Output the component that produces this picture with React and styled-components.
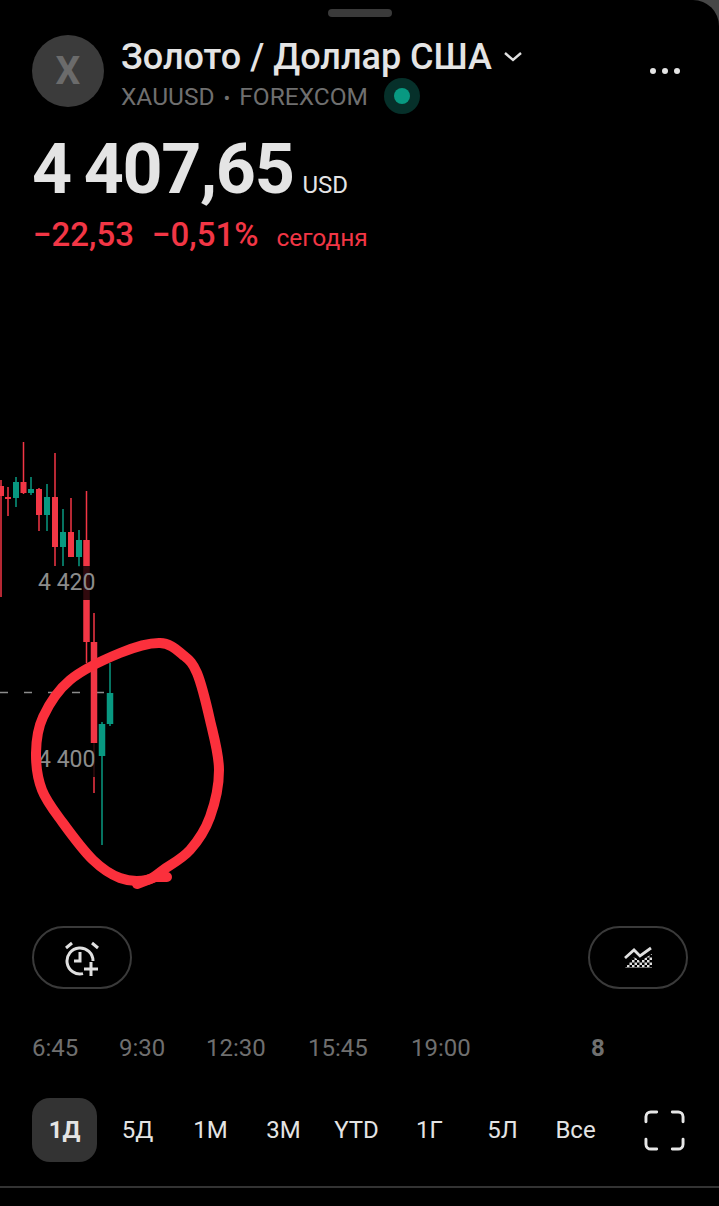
import React from "react"
import styled, { createGlobalStyle } from "styled-components"

const RANGES = ["1Д", "5Д", "1М", "3М", "YTD", "1Г", "5Л", "Все"]
const TIMES = [
  { label: "6:45", width: 87 },
  { label: "9:30", width: 87 },
  { label: "12:30", width: 102 },
  { label: "15:45", width: 103 },
  { label: "19:00", width: 180 },
  { label: "8", bold: true },
]

// x, wick top, wick bottom, body top, body bottom, width
const CANDLES = [
  { up: false, x: 1, wt: 480, wb: 597, bt: 486, bb: 496, w: 6 },
  { up: false, x: 8, wt: 487, wb: 516, bt: 497, bb: 499, w: 6 },
  { up: true, x: 16, wt: 477, wb: 507, bt: 482, bb: 498, w: 6 },
  { up: false, x: 23.5, wt: 442, wb: 494, bt: 482, bb: 493, w: 6 },
  { up: true, x: 31, wt: 477, wb: 495, bt: 489, bb: 493, w: 6 },
  { up: false, x: 39, wt: 488, wb: 531, bt: 489, bb: 515, w: 6 },
  { up: true, x: 47, wt: 484, wb: 531, bt: 497, bb: 515, w: 6 },
  { up: false, x: 55, wt: 453, wb: 566, bt: 497, bb: 547, w: 6 },
  { up: true, x: 63, wt: 509, wb: 566, bt: 532, bb: 547, w: 6 },
  { up: false, x: 71, wt: 498, wb: 557, bt: 532, bb: 557, w: 6 },
  { up: true, x: 79, wt: 530, wb: 567, bt: 540, bb: 557, w: 6 },
  { up: false, x: 86.5, wt: 491, wb: 663, bt: 540, bb: 642, w: 6.5 },
  { up: false, x: 94, wt: 613, wb: 793, bt: 642, bb: 743, w: 6.5 },
  { up: true, x: 102, wt: 722, wb: 845, bt: 724, bb: 756, w: 6.5 },
  { up: true, x: 110, wt: 663, wb: 726, bt: 693, bb: 724, w: 6.5 },
]

const LOOP = [
  [160, 643], [183, 655], [197, 673], [210, 720], [219, 770], [210, 817],
  [190, 850], [163, 870], [147, 880], [120, 878], [93, 860], [63, 823],
  [42, 790], [36, 753], [43, 717], [70, 680], [120, 653],
]

const CHART_TOP = 270

// closed catmull-rom through the points, shifted into chart coordinates
function loopPath(points) {
  const p = points.map(([x, y]) => [x, y - CHART_TOP])
  const n = p.length
  let d = `M${p[0][0]} ${p[0][1]}`
  for (let i = 0; i < n; i++) {
    const a = p[(i - 1 + n) % n]
    const b = p[i]
    const c = p[(i + 1) % n]
    const e = p[(i + 2) % n]
    const c1 = [b[0] + (c[0] - a[0]) / 6, b[1] + (c[1] - a[1]) / 6]
    const c2 = [c[0] - (e[0] - b[0]) / 6, c[1] - (e[1] - b[1]) / 6]
    d += `C${c1[0]} ${c1[1]} ${c2[0]} ${c2[1]} ${c[0]} ${c[1]}`
  }
  return d
}

function App() {
  return (
    <>
      <GlobalStyle />
      <Sheet>
        <Handle />
        <Header>
          <Avatar>X</Avatar>
          <TitleBlock>
            <TitleRow>
              <Title>Золото / Доллар США</Title>
              <svg width="20" height="12" viewBox="0 0 20 12" fill="none" stroke="#e0e0e0" strokeWidth="2.4">
                <path d="M2 2l8 7 8-7" />
              </svg>
            </TitleRow>
            <SubRow>
              <Symbol>
                XAUUSD<Bullet>•</Bullet>FOREXCOM
              </Symbol>
              <StatusHalo>
                <StatusDot />
              </StatusHalo>
            </SubRow>
          </TitleBlock>
          <MoreButton>
            <MoreDot />
            <MoreDot />
            <MoreDot />
          </MoreButton>
        </Header>
        <PriceRow>
          <Price>4 407,65</Price>
          <Currency>USD</Currency>
        </PriceRow>
        <ChangeRow>
          <Change>−22,53</Change>
          <Change>−0,51%</Change>
          <Today>сегодня</Today>
        </ChangeRow>
        <Chart>
          <ChartSvg width="719" height="630" viewBox="0 0 719 630">
            <line x1="0" x2="108" y1="422.5" y2="422.5" stroke="#8c8c8c" strokeWidth="1.5" strokeDasharray="8 16" />
            {CANDLES.map((c) => (
              <g key={c.x} fill={c.up ? "#089981" : "#f23645"}>
                <rect x={c.x - 0.75} y={c.wt - CHART_TOP} width="1.5" height={c.wb - c.wt} />
                <rect x={c.x - c.w / 2} y={c.bt - CHART_TOP} width={c.w} height={c.bb - c.bt} />
              </g>
            ))}
          </ChartSvg>
          <AxisLabel $top={296}>4 420</AxisLabel>
          <AxisLabel $top={473}>4 400</AxisLabel>
          <ChartSvg width="719" height="630" viewBox="0 0 719 630" fill="none" stroke="#fb303c" strokeWidth="10" strokeLinecap="round">
            <path d={loopPath(LOOP)} />
            <path d="M137 614l18-7 12 0" />
          </ChartSvg>
        </Chart>
        <ActionRow>
          <PillButton>
            <svg width="36" height="36" viewBox="0 0 36 36" fill="none" stroke="#e0e0e0" strokeWidth="3">
              <path d="M2 8L8 3M28 3L34 8" />
              <path d="M19 33.6A13 13 0 1 1 29 21" />
              <path d="M16 12v9h-6" />
              <path d="M27 22v14M20 29h14" />
            </svg>
          </PillButton>
          <PillButton>
            <svg width="32" height="26" viewBox="0 0 32 26">
              <defs>
                <pattern id="dither" width="5" height="5" patternUnits="userSpaceOnUse">
                  <rect width="2.5" height="2.5" fill="#e0e0e0" />
                  <rect x="2.5" y="2.5" width="2.5" height="2.5" fill="#e0e0e0" />
                </pattern>
              </defs>
              <path d="M3 23l9-11 6 4 12-7v14z" fill="url(#dither)" />
              <path d="M3 13l9-8 6 6 11-8" fill="none" stroke="#e0e0e0" strokeWidth="2.8" />
            </svg>
          </PillButton>
        </ActionRow>
        <TimeRow>
          {TIMES.map((t) => (
            <TimeLabel key={t.label} $width={t.width} $bold={t.bold}>
              {t.label}
            </TimeLabel>
          ))}
        </TimeRow>
        <RangeRow>
          <RangeTabs>
            {RANGES.map((r, i) => (
              <RangeTab key={r} $active={i === 0}>
                {r}
              </RangeTab>
            ))}
          </RangeTabs>
          <svg width="41" height="41" viewBox="0 0 42 42" fill="none" stroke="#e6e6e6" strokeWidth="3" strokeLinecap="round">
            <path d="M2 12V7a5 5 0 0 1 5-5h6M29 2h6a5 5 0 0 1 5 5v5M40 30v5a5 5 0 0 1-5 5h-6M13 40H7a5 5 0 0 1-5-5v-5" />
          </svg>
        </RangeRow>
        <BottomLine />
      </Sheet>
    </>
  )
}

export default App

const GlobalStyle = createGlobalStyle`
  html, body {
    margin: 0;
    padding: 0;
    background: #474747;
  }
  body {
    font-family: Roboto, "Liberation Sans", sans-serif;
  }
`
const Sheet = styled.div`
  width: 719px;
  height: 1206px;
  background: #000;
  border-top-right-radius: 26px;
  overflow: hidden;
  display: flex;
  flex-direction: column;
`
const Handle = styled.div`
  flex: none;
  width: 64px;
  height: 8px;
  margin: 9px auto 0;
  border-radius: 4px;
  background: #3a3a3a;
`
const Header = styled.div`
  display: flex;
  align-items: flex-start;
  gap: 17px;
  padding: 18px 39px 0 32px;
  height: 72px;
`
const Avatar = styled.div`
  flex: none;
  width: 72px;
  height: 72px;
  border-radius: 50%;
  background: #3b3b3b;
  color: #6b6b6b;
  font-size: 39px;
  font-weight: 700;
  display: flex;
  align-items: center;
  justify-content: center;
`
const TitleBlock = styled.div`
  flex: 1;
  display: flex;
  flex-direction: column;
`
const TitleRow = styled.div`
  display: flex;
  align-items: center;
  gap: 11px;
  height: 42px;
  box-sizing: border-box;
  padding-top: 2px;
`
const Title = styled.div`
  color: #e4e4e4;
  font-size: 36px;
  font-weight: 500;
  white-space: nowrap;
`
const SubRow = styled.div`
  display: flex;
  align-items: center;
  gap: 16px;
  height: 38px;
`
const Symbol = styled.div`
  color: #6f6f6f;
  font-size: 24.5px;
  white-space: nowrap;
`
const Bullet = styled.span`
  margin: 0 9px;
  font-size: 20px;
`
const StatusHalo = styled.div`
  width: 36px;
  height: 36px;
  border-radius: 50%;
  background: #06302a;
  display: flex;
  align-items: center;
  justify-content: center;
`
const StatusDot = styled.div`
  width: 16px;
  height: 16px;
  border-radius: 50%;
  background: #089981;
`
const MoreButton = styled.div`
  display: flex;
  gap: 6px;
  margin-top: 33px;
`
const MoreDot = styled.div`
  width: 6px;
  height: 6px;
  border-radius: 50%;
  background: #e4e4e4;
`
const PriceRow = styled.div`
  display: flex;
  align-items: baseline;
  gap: 9px;
  padding: 21px 0 0 32px;
  height: 81px;
`
const Price = styled.div`
  color: #e4e4e4;
  font-size: 70px;
  font-weight: 700;
  line-height: 82px;
  letter-spacing: -1.4px;
  word-spacing: -3px;
`
const Currency = styled.div`
  color: #e4e4e4;
  font-size: 24px;
`
const ChangeRow = styled.div`
  display: flex;
  align-items: baseline;
  gap: 18px;
  padding: 6px 0 0 33px;
  height: 36px;
`
const Change = styled.div`
  color: #f23645;
  font-size: 33px;
  font-weight: 500;
`
const Today = styled.div`
  color: #f23645;
  font-size: 24.5px;
`
const Chart = styled.div`
  position: relative;
  flex: none;
  height: 630px;
  margin-top: 19px;
`
const ChartSvg = styled.svg`
  position: absolute;
  left: 0;
  top: 0;
`
const AxisLabel = styled.div`
  position: absolute;
  left: 35px;
  top: ${(p) => p.$top}px;
  padding: 0 3px;
  line-height: 34px;
  font-size: 23px;
  color: #8c8c8c;
  background: rgba(0, 0, 0, 0.8);
  white-space: nowrap;
`
const ActionRow = styled.div`
  display: flex;
  justify-content: space-between;
  padding: 0 31px 0 32px;
  margin-top: 26px;
`
const PillButton = styled.div`
  width: 100px;
  height: 63px;
  box-sizing: border-box;
  border: 2px solid #3a3a3a;
  border-radius: 32px;
  display: flex;
  align-items: center;
  justify-content: center;
`
const TimeRow = styled.div`
  display: flex;
  align-items: center;
  padding-left: 32px;
  height: 40px;
  margin-top: 39px;
`
const TimeLabel = styled.div`
  width: ${(p) => (p.$width ? `${p.$width}px` : "auto")};
  flex: none;
  color: #6f6f6f;
  font-size: 24px;
  font-weight: ${(p) => (p.$bold ? 700 : 400)};
`
const RangeRow = styled.div`
  display: flex;
  align-items: center;
  padding-left: 32px;
  margin-top: 30px;
  height: 64px;
`
const RangeTabs = styled.div`
  display: flex;
  gap: 8px;
  flex: none;
  width: 612px;
`
const RangeTab = styled.div`
  flex: none;
  width: 65px;
  height: 64px;
  border-radius: 18px;
  display: flex;
  align-items: center;
  justify-content: center;
  font-size: 24px;
  font-weight: ${(p) => (p.$active ? 700 : 400)};
  color: #e4e4e4;
  background: ${(p) => (p.$active ? "#333" : "transparent")};
`
const BottomLine = styled.div`
  height: 2px;
  background: #333;
  margin-top: 24px;
`
